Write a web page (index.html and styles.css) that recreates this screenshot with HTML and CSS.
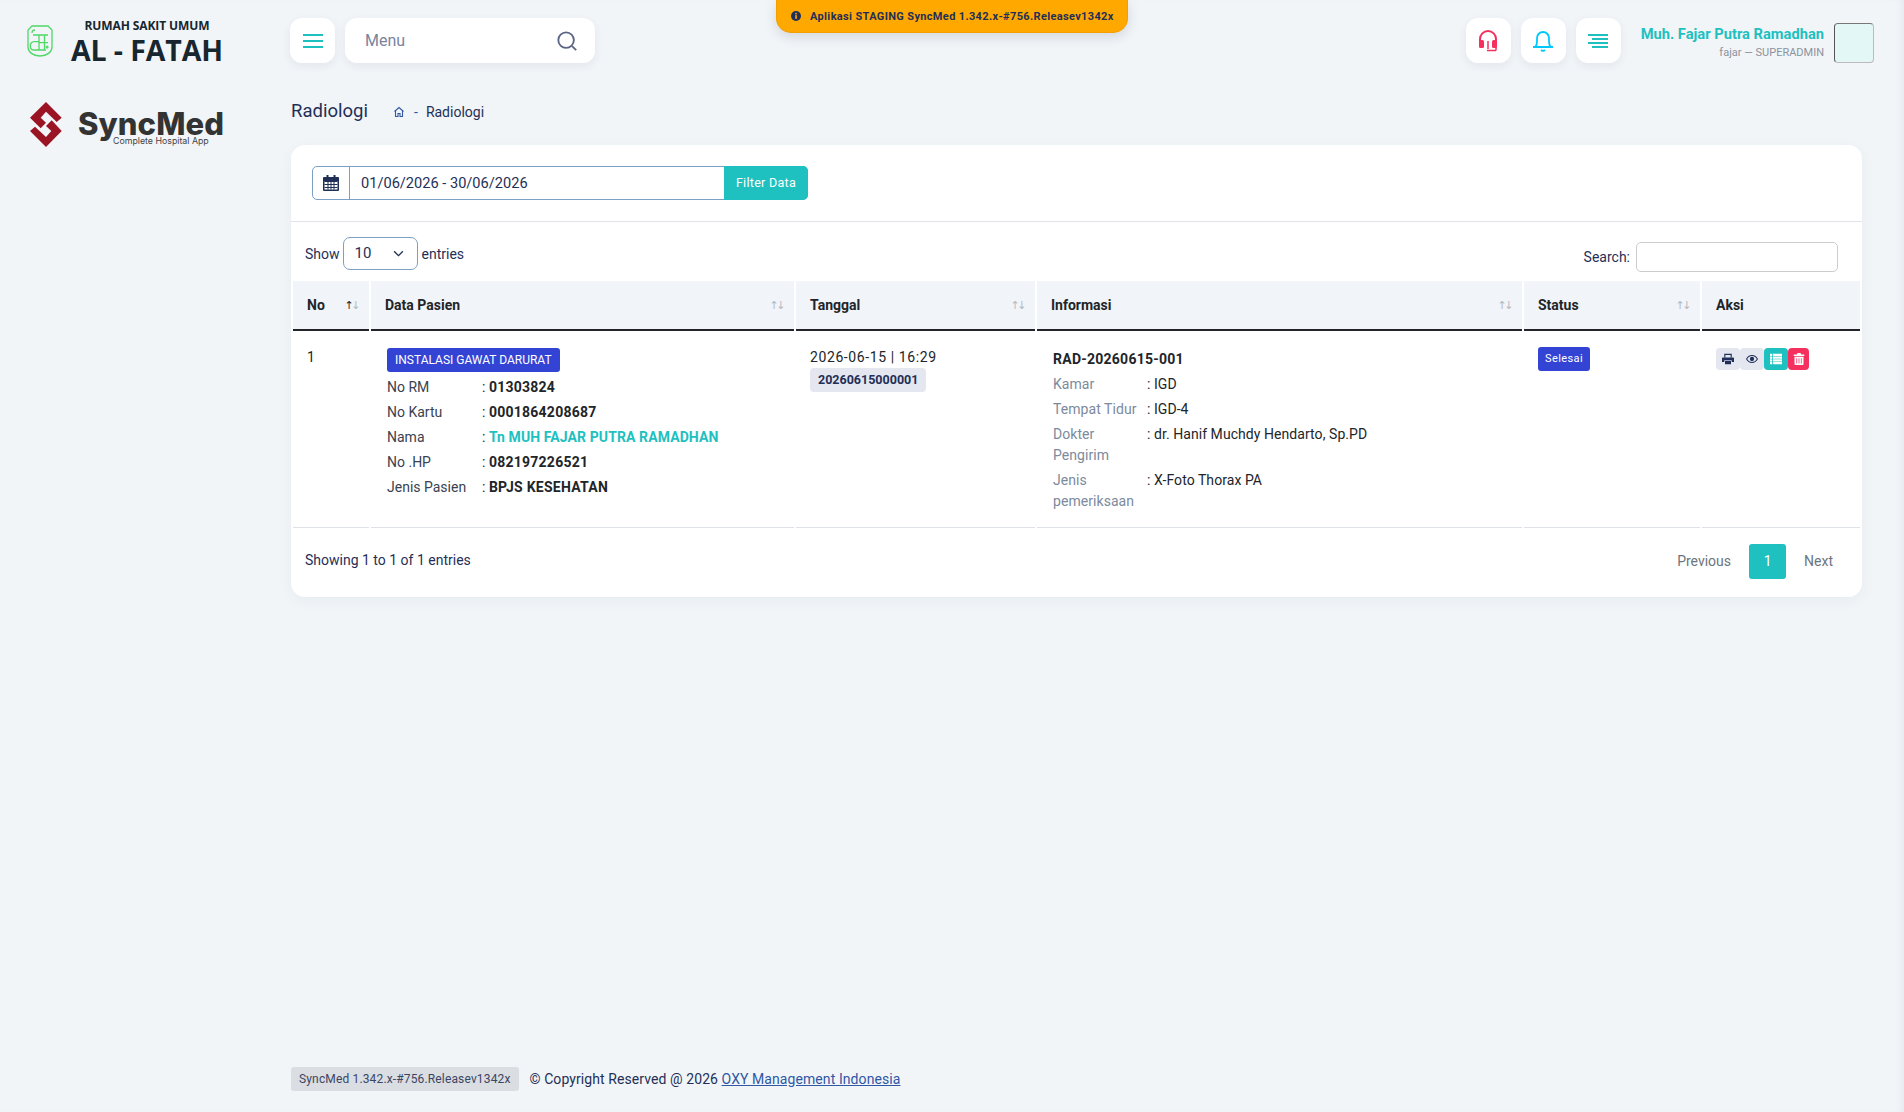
FILE: index.html
```html
<!DOCTYPE html>
<html lang="en">
<head>
  <meta charset="UTF-8"/>
  <title>Radiologi</title>
  <link rel="stylesheet" href="styles.css">
</head>
<body>

  <div class="staging-note">
    <svg class="note-icon" viewBox="0 0 16 16"><circle cx="8" cy="8" r="8" fill="#1f2f57"/><rect x="6.8" y="6.6" width="2.6" height="6" fill="#ffa800"/><rect x="6.8" y="3" width="2.6" height="2.4" fill="#ffa800"/></svg>
    <span>Aplikasi STAGING SyncMed 1.342.x-#756.Releasev1342x</span>
  </div>

  <aside class="sidebar">
    <div class="brand">
      <svg class="brand-icon" viewBox="0 0 26 32" fill="none" stroke="#4fd866" stroke-width="1.3">
        <path d="M5 1h16l4 4v17c0 5-5 9-12 9S1 27 1 22V5z"/>
        <path d="M5 8c0-2 1-3 3-3M6 10h15M12 10v15M17.500 10v15M12 17.700h9M12 16.700H7c-2.500 0-3.700 2-3.700 4.200S4.500 25 7 25h12"/>
        <path d="M20 20l1 1.500 1.500.5-1.500.8-1 1.500-.8-1.500-1.500-.8 1.500-.5z" fill="#4fd866" stroke="none"/>
      </svg>
      <div class="brand-text">
        <div class="brand-top">RUMAH SAKIT UMUM</div>
        <div class="brand-name">AL - FATAH</div>
      </div>
    </div>
    <div class="syncmed">
      <svg class="syncmed-icon" viewBox="0 0 32 45" fill="#9b1424">
        <path d="M16 0L31.700 15.700 26.700 20 16 9.700 10.700 15.700 16 20.700 10.700 26.300 0 15.700z"/>
        <path d="M16 45L0 29 5 24.700 16 35 21.300 29 16 24 21.700 18.300 31.700 29z"/>
      </svg>
      <div class="syncmed-text">
        <div class="syncmed-name">SyncMed</div>
        <div class="syncmed-sub">Complete Hospital App</div>
      </div>
    </div>
  </aside>

  <main class="main">
    <header class="topbar">
      <button class="tool-btn">
        <svg class="ico" viewBox="0 0 20 14" fill="#1ec0c0"><rect width="20" height="2"/><rect y="6" width="20" height="2"/><rect y="12" width="20" height="2"/></svg>
      </button>
      <div class="menu-search">
        <span>Menu</span>
        <svg class="search-ico" viewBox="0 0 24 24" fill="none" stroke="#5b6584" stroke-width="2"><circle cx="11" cy="11" r="8.500"/><path d="M17.500 17.500L22 22"/></svg>
      </div>
      <div class="topbar-right">
        <button class="tool-btn">
          <svg class="ico-lg" viewBox="0 0 20 22" fill="none" stroke="#f5305e" stroke-width="2">
            <path d="M2 13V9a8 8 0 0 1 16 0v4"/>
            <rect x="1" y="10" width="5" height="8" rx="1.500" fill="#f5305e" stroke="none"/>
            <rect x="14" y="10" width="5" height="8" rx="1.500" fill="#f5305e" stroke="none"/>
            <path d="M9 20.500h9M18 17v3.500M10 11v8" stroke-width="1.500"/>
          </svg>
        </button>
        <button class="tool-btn">
          <svg class="ico-lg" viewBox="0 0 22 22" fill="none" stroke="#00c8ff" stroke-width="1.800">
            <path d="M1 17h20M3.500 17c1-1.500 1.500-3 1.500-6V8a6 6 0 0 1 12 0v3c0 3 .5 4.500 1.500 6"/>
            <path d="M9 20c1 1 3 1 4 0"/>
          </svg>
        </button>
        <button class="tool-btn">
          <svg class="ico" viewBox="0 0 20 14" fill="#1ec0c0"><rect width="20" height="2"/><rect x="4" y="4" width="16" height="2"/><rect y="8" width="20" height="2"/><rect x="4" y="12" width="16" height="2"/></svg>
        </button>
        <div class="user">
          <div class="user-name">Muh. Fajar Putra Ramadhan</div>
          <div class="user-role">fajar — SUPERADMIN</div>
        </div>
        <div class="avatar"></div>
      </div>
    </header>

    <div class="page-title">
      <h1>Radiologi</h1>
      <svg class="home-ico" viewBox="0 0 24 24" fill="none" stroke="#2f57a5" stroke-width="2.200"><path d="M3 11l9-8 9 8M5 9.500V21h5v-6h4v6h5V9.500"/></svg>
      <span class="crumb-sep">-</span>
      <span class="crumb">Radiologi</span>
    </div>

    <section class="card">
      <div class="filter-row">
        <div class="date-group">
          <div class="date-addon">
            <svg class="cal-ico" viewBox="0 0 16 16" fill="#1f2f57"><path d="M3.500 0h2v2h5V0h2v2H15a1 1 0 0 1 1 1v12a1 1 0 0 1-1 1H1a1 1 0 0 1-1-1V3a1 1 0 0 1 1-1h2.500z"/><path d="M1.500 6h13v8.500h-13z" fill="#fff"/><path d="M1.500 6h13v1h-13zM1.500 9h13v1h-13zM1.500 12h13v1h-13zM4.500 6h1v8.500h-1zM7.500 6h1v8.500h-1zM10.500 6h1v8.500h-1z"/></svg>
          </div>
          <div class="date-value">01/06/2026 - 30/06/2026</div>
          <button class="filter-btn">Filter Data</button>
        </div>
      </div>

      <div class="table-tools">
        <div class="show-entries">
          <span class="tools-label">Show</span>
          <div class="entries-select">
            <span>10</span>
            <svg class="chev" viewBox="0 0 12 8" fill="none" stroke="#1f2f57" stroke-width="1.500"><path d="M1 1.500l5 5 5-5"/></svg>
          </div>
          <span class="tools-label">entries</span>
        </div>
        <div class="table-search">
          Search:
          <div class="search-box"></div>
        </div>
      </div>

      <table class="data-table">
        <colgroup>
          <col class="col-no"><col class="col-pasien"><col class="col-tanggal"><col class="col-info"><col class="col-status"><col class="col-aksi">
        </colgroup>
        <thead>
          <tr>
            <th><div class="th-in">No <span class="sort"><b>↑</b>↓</span></div></th>
            <th><div class="th-in">Data Pasien <span class="sort">↑↓</span></div></th>
            <th><div class="th-in">Tanggal <span class="sort">↑↓</span></div></th>
            <th><div class="th-in">Informasi <span class="sort">↑↓</span></div></th>
            <th><div class="th-in">Status <span class="sort">↑↓</span></div></th>
            <th><div class="th-in">Aksi</div></th>
          </tr>
        </thead>
        <tbody>
          <tr>
            <td>1</td>
            <td>
              <div class="inner">
                <span class="badge-blue badge-unit">INSTALASI GAWAT DARURAT</span>
                <div class="pasien-grid">
                  <span>No RM</span><span>: <b>01303824</b></span>
                  <span>No Kartu</span><span>: <b>0001864208687</b></span>
                  <span>Nama</span><span>: <b class="teal">Tn MUH FAJAR PUTRA RAMADHAN</b></span>
                  <span>No .HP</span><span>: <b>082197226521</b></span>
                  <span>Jenis Pasien</span><span>: <b>BPJS KESEHATAN</b></span>
                </div>
              </div>
            </td>
            <td>
              <div class="date-time">2026-06-15 | 16:29</div>
              <span class="badge-reg">20260615000001</span>
            </td>
            <td>
              <div class="inner">
                <div class="rad-no">RAD-20260615-001</div>
                <div class="info-grid">
                  <span class="muted">Kamar</span><span>: IGD</span>
                  <span class="muted">Tempat Tidur</span><span>: IGD-4</span>
                  <span class="muted">Dokter Pengirim</span><span>: dr. Hanif Muchdy Hendarto, Sp.PD</span>
                  <span class="muted">Jenis pemeriksaan</span><span>: X-Foto Thorax PA</span>
                </div>
              </div>
            </td>
            <td><span class="badge-blue badge-status">Selesai</span></td>
            <td>
              <div class="actions">
                <button class="act act-grey"><svg viewBox="0 0 16 16" fill="#1f2f57"><path d="M3 1h10v5H3zM4.500 2.500V6h7V2.500z" fill-rule="evenodd"/><path d="M1 6h14a1 1 0 0 1 1 1v5h-3V9.500H3V12H0V7a1 1 0 0 1 1-1z"/><path d="M4 10.500h8V15H4z"/></svg></button>
                <button class="act act-grey"><svg viewBox="0 0 18 12" fill="#1f2f57"><path d="M9 0c4 0 7.500 2.500 9 6-1.500 3.500-5 6-9 6s-7.500-2.500-9-6c1.500-3.500 5-6 9-6zm0 1.500C6 1.500 3.200 3.300 1.800 6 3.200 8.700 6 10.500 9 10.500s5.800-1.800 7.200-4.500C14.800 3.300 12 1.500 9 1.500z"/><circle cx="9" cy="6" r="3.200"/></svg></button>
                <button class="act act-teal"><svg viewBox="0 0 16 14" fill="#fff"><rect width="3" height="3"/><rect x="4" width="12" height="3"/><rect y="3.700" width="3" height="3"/><rect x="4" y="3.700" width="12" height="3"/><rect y="7.400" width="3" height="3"/><rect x="4" y="7.400" width="12" height="3"/><rect y="11" width="3" height="3"/><rect x="4" y="11" width="12" height="3"/></svg></button>
                <button class="act act-red"><svg viewBox="0 0 14 16" fill="#fff"><path d="M5 0h4l1 2h4v2H0V2h4z"/><path d="M1 5h12v10a1 1 0 0 1-1 1H2a1 1 0 0 1-1-1zm2.500 2v7h1V7zm3 0v7h1V7zm3 0v7h1V7z" fill-rule="evenodd"/></svg></button>
              </div>
            </td>
          </tr>
        </tbody>
      </table>

      <div class="table-foot">
        <div class="table-info">Showing 1 to 1 of 1 entries</div>
        <div class="pager">
          <span class="page-link">Previous</span>
          <span class="page-on">1</span>
          <span class="page-link">Next</span>
        </div>
      </div>
    </section>

    <footer class="footer">
      <span class="version">SyncMed 1.342.x-#756.Releasev1342x</span>
      <span class="copyright">© Copyright Reserved @ 2026 <a href="#" class="footer-link">OXY Management Indonesia</a></span>
    </footer>
  </main>

</body>
</html>
```

FILE: styles.css
```css
:root {
  --bg: #f1f5f8;
  --teal: #1ec0c0;
  --navy: #1f2f57;
  --blue: #3344d4;
  --chip: #e4e7f0;
}
*,*::before,*::after { box-sizing:border-box; margin:0; padding:0 }
body {
  background: var(--bg);
  color: var(--navy);
  font-family: Roboto, "Noto Sans", sans-serif;
  font-size: 14px;
  line-height: 21px;
  display: flex;
  min-height: 100vh;
  box-shadow: inset -6px 0 8px -6px rgba(60,70,100,.1);
}
button { border:none; font-family:inherit; }

/* orange note on top */
.staging-note {
  position: absolute;
  top: 0; left: 776px;
  width: 352px; height: 33px;
  padding-left: 14px;
  background: #ffa800;
  border: 1px solid #f39f00;
  border-top: none;
  border-radius: 0 0 15px 15px;
  box-shadow: 0 4px 12px rgba(40,50,70,.15);
  display: flex;
  align-items: center;
  gap: 9px;
  font-size: 11px;
  font-weight: 700;
  letter-spacing: .35px;
}
.note-icon { width:10px; height:10px; }

/* left column */
.sidebar {
  width: 290px;
  flex: none;
  padding: 16px 0 0 27px;
}
.brand { display:flex; align-items:center; gap:18px; }
.brand-icon { width:26px; height:32px; margin-top:-1px; flex:none; }
.brand-text { text-align:center; color:#17262f; font-family:"Open Sans", sans-serif; font-weight:700; }
.brand-top { font-size:12px; line-height:19px; letter-spacing:-.1px; }
.brand-name { font-size:28.500px; line-height:31px; letter-spacing:-.1px; }
.syncmed { display:flex; gap:16px; margin-top:36px; padding-left:3px; }
.syncmed-icon { width:32px; height:45px; flex:none; }
.syncmed-name { font-family:Inter, sans-serif; font-weight:800; font-size:31px; line-height:44px; color:#333; letter-spacing:.1px; }
.syncmed-sub { font-family:Inter, sans-serif; font-size:8.800px; line-height:10px; color:#444; margin:-10px 0 0 35px; }

/* main column */
.main {
  flex: 1;
  padding: 18px 42px 0 0;
  display: flex;
  flex-direction: column;
  min-height: 100vh;
}
.topbar { display:flex; align-items:flex-start; gap:10px; height:45px; }
.tool-btn {
  width: 45px; height: 45px;
  background: #fff;
  border-radius: 12px;
  box-shadow: 0 3px 8px rgba(60,70,100,.08);
  display: flex;
  align-items: center;
  justify-content: center;
}
.ico { width:20px; height:14px; }
.ico-lg { width:22px; height:22px; }
.menu-search {
  width: 250px; height: 45px;
  padding: 0 17px 0 20px;
  background: #fff;
  border-radius: 12px;
  box-shadow: 0 3px 8px rgba(60,70,100,.08);
  display: flex;
  align-items: center;
  justify-content: space-between;
  font-size: 16px;
  color: #7a839e;
}
.search-ico { width:22px; height:22px; }
.topbar-right { margin-left:auto; display:flex; align-items:flex-start; gap:10px; margin-right:-12px; }
.user { text-align:right; margin:0 0 0 10px; padding-top:5px; }
.user-name { font-size:14.700px; line-height:22px; font-weight:700; color:var(--teal); }
.user-role { font-size:11px; line-height:16px; color:#8d929c; }
.avatar {
  width: 40px; height: 40px;
  margin-top: 5px;
  background: #e3f7f7;
  border-left: 1px solid #555;
  border-top: 1px solid #777;
  border-right: 1px solid #bbb;
  border-bottom: 1px solid #bbb;
  border-radius: 4px;
}

.page-title {
  display: flex;
  align-items: center;
  margin: 35px 0 0 1px;
  height: 26px;
}
.page-title h1 { font-size:18.500px; font-weight:400; width:102px; margin-top:1px; }
.home-ico { width:12px; height:12px; margin-top:2px; }
.crumb-sep { margin:2px 9px 0 9px; color:#2f57a5; }
.crumb { font-size:14px; margin-top:2px; margin-left:-1px; }

.card {
  margin: 21px 0 0 1px;
  background: #fff;
  border-radius: 14px;
  box-shadow: 0 4px 14px rgba(60,70,100,.05);
  height: 452px;
}
.filter-row {
  padding: 21px 21px 21px;
  border-bottom: 1px solid #e0e3eb;
  height: 77px;
}
.date-group {
  width: 496px; height: 34px;
  display: flex;
  border: 1px solid #7c9fc4;
  border-radius: 5px;
}
.date-addon {
  width: 37px;
  border-right: 1px solid #7c9fc4;
  display: flex;
  align-items: center;
  justify-content: center;
}
.cal-ico { width:16px; height:16px; }
.date-value { flex:1; padding:0 11px; line-height:32px; font-size:14.600px; }
.filter-btn {
  width: 84px;
  margin: -1px;
  padding-bottom: 1px;
  background: var(--teal);
  color: #fff;
  font-size: 12.500px;
  letter-spacing: .3px;
  border-radius: 0 5px 5px 0;
}

.table-tools {
  display: flex;
  justify-content: space-between;
  padding: 15px 24px 0 14px;
  height: 59px;
}
.show-entries { display:flex; align-items:center; gap:3px; height:33px; }
.tools-label { margin-top:2px; }
.tools-label:last-child { margin-left:1px; }
.entries-select {
  width: 75px; height: 33px;
  padding: 0 13px 0 11px;
  border: 1px solid #7c9fc4;
  border-radius: 7px;
  display: flex;
  align-items: center;
  justify-content: space-between;
  font-size: 15px;
}
.chev { width:11px; height:7px; }
.table-search { display:flex; align-items:center; gap:6px; height:30px; margin-top:5px; }
.search-box { width:202px; height:30px; border:1px solid #ccc; border-radius:5px; }

.data-table {
  width: 100%;
  table-layout: fixed;
  border-collapse: separate;
  border-spacing: 2px 0;
  color: #212529;
}
.col-no { width:76px; }
.col-pasien { width:423px; }
.col-tanggal { width:239px; }
.col-info { width:485px; }
.col-status { width:176px; }
.col-aksi { width:158px; }
.data-table th {
  height: 50px;
  background: #f1f4f8;
  border-bottom: 2px solid #212529;
  padding: 0 9px 0 14px;
  text-align: left;
}
.th-in { display:flex; justify-content:space-between; align-items:center; }
.sort { font-family:"DejaVu Sans", sans-serif; font-weight:400; font-size:11px; color:#b5b9c0; letter-spacing:-2.500px; margin-right:2px; }
.sort b { font-weight:400; color:#212529; }
.data-table td {
  height: 197px;
  padding: 16px 14px 0;
  vertical-align: top;
  border-bottom: 1px solid #dee2e6;
}
.inner { padding-left:2px; }
.inner b, .rad-no { letter-spacing:.25px; }
.inner b.teal { letter-spacing:.1px; }
.badge-blue {
  display: inline-block;
  background: var(--blue);
  color: #fff;
  border-radius: 3px;
  font-size: 11px;
}
.badge-unit { height:24px; line-height:24px; padding:0 8px; margin-top:1px; font-size:12px; }
.pasien-grid {
  display: grid;
  grid-template-columns: 95px 1fr;
  grid-auto-rows: 25px;
  line-height: 25px;
  margin-top: 3px;
}
.pasien-grid span:nth-child(odd) { color:#3a4250; }
.teal { color:var(--teal); }
.date-time { letter-spacing:.6px; }
.badge-reg {
  display: inline-block;
  height: 24px;
  line-height: 24px;
  padding: 0 8px;
  background: var(--chip);
  border-radius: 4px;
  font-size: 12.500px;
  font-weight: 700;
  color: var(--navy);
}
.rad-no { font-weight:700; margin-top:2px; }
.info-grid {
  display: grid;
  grid-template-columns: 94px 1fr;
  margin-top: 4px;
  row-gap: 4px;
  letter-spacing: .06px;
}
.muted { color:#7c8a9c; }
.badge-status { height:24px; line-height:24px; padding:0 7px; letter-spacing:.4px; }
.actions { display:flex; margin-top:1px; }
.act {
  height: 22px;
  width: 24px;
  display: flex;
  align-items: center;
  justify-content: center;
  border-radius: 4px;
}
.act svg { width:12px; height:12px; }
.act-grey { background:var(--chip); }
.act-teal { background:var(--teal); }
.act-red { background:#f5305e; width:21px; }

.table-foot {
  display: flex;
  justify-content: space-between;
  padding: 15px 29px 0 14px;
}
.table-info { padding-top:7px; }
.pager { display:flex; align-items:center; height:36px; color:#6c757d; }
.page-on {
  width: 37px; height: 35px;
  margin: 0 18px;
  background: var(--teal);
  color: #fff;
  border-radius: 3px;
  text-align: center;
  line-height: 35px;
}

.footer {
  margin: auto 0 21px 1px;
  display: flex;
  align-items: center;
  gap: 11px;
}
.version {
  height: 24px;
  line-height: 24px;
  padding: 0 8px;
  background: #dadde1;
  border-radius: 3px;
  font-size: 12px;
  color: #3b4664;
  letter-spacing: .15px;
}
.copyright { letter-spacing:.08px; }
.footer-link { color:#2f57a5; }
```
